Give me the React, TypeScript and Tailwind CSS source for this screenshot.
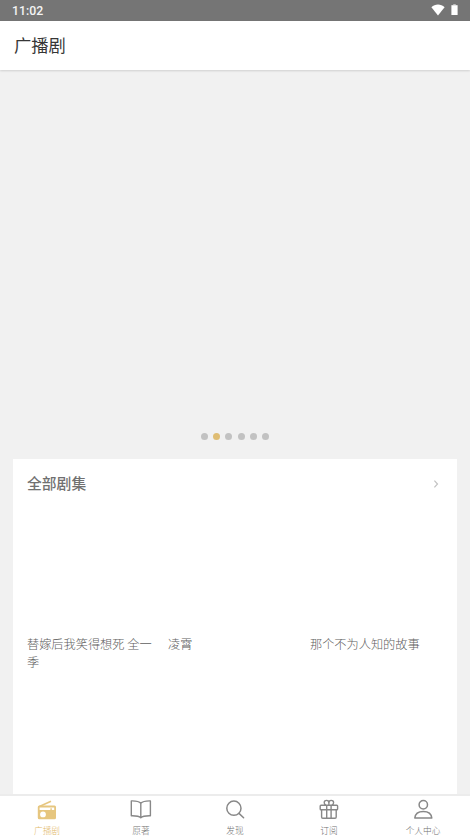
const dots = [0, 1, 2, 3, 4, 5];

const dramas = ["替嫁后我笑得想死 全一季", "凌霄", "那个不为人知的故事"];

function RadioIcon() {
  return (
    <svg width="22" height="22" viewBox="0 0 22 22">
      <path d="M3.4 7.4 15 2.2" stroke="#e6c67f" strokeWidth="1.6" fill="none" />
      <path
        fill="#e6c67f"
        fillRule="evenodd"
        d="M3.3 6.6h15.2a1.5 1.5 0 0 1 1.5 1.5v10.6a1.5 1.5 0 0 1-1.5 1.5H3.3a1.5 1.5 0 0 1-1.5-1.5V8.1a1.5 1.5 0 0 1 1.5-1.5zM3.6 8.4v2.5h10.8V9.2h1.4v1.7h2.4V8.4zM7 12.5a2.9 2.9 0 1 0 0 5.8a2.9 2.9 0 1 0 0-5.8z"
      />
    </svg>
  );
}

function BookIcon() {
  return (
    <svg width="22" height="22" viewBox="0 0 22 22" fill="none" stroke="#888" strokeWidth="1.4" strokeLinejoin="round">
      <path d="M10.8 4.2C9.5 2.7 6 1.8 1.3 1.9V16.8C6 16.7 9.3 17.2 10.8 18.8C12.4 17.2 15.7 16.7 20.4 16.8V1.9C15.7 1.8 12.2 2.7 10.8 4.2zV18.6" />
    </svg>
  );
}

function SearchIcon() {
  return (
    <svg width="22" height="22" viewBox="0 0 22 22" fill="none" stroke="#888" strokeWidth="1.5" strokeLinecap="round">
      <circle cx="9.9" cy="9.2" r="7.1" />
      <path d="m15 14.4 4.6 4.3" />
    </svg>
  );
}

function GiftIcon() {
  return (
    <svg width="22" height="22" viewBox="0 0 22 22" fill="none" stroke="#888" strokeWidth="1.4" strokeLinejoin="round">
      <rect x="2.2" y="6.2" width="17.4" height="4.6" rx="0.8" />
      <path d="M3.6 10.8v7.2a1.2 1.2 0 0 0 1.2 1.2h12.2a1.2 1.2 0 0 0 1.2-1.2v-7.2M8.7 6.2v13M13.1 6.2v13" />
      <path d="M10.9 6V3.9C10.9 .5 6.2 .6 6.2 3.6C6.2 5.2 6.9 5.9 8 6.2M10.9 3.9C10.9 .5 15.6 .6 15.6 3.6C15.6 5.2 14.9 5.9 13.8 6.2" />
    </svg>
  );
}

function UserIcon() {
  return (
    <svg width="22" height="22" viewBox="0 0 22 22" fill="none" stroke="#888" strokeWidth="1.5" strokeLinejoin="round">
      <circle cx="11.3" cy="5.7" r="4.2" />
      <path d="M2.8 19C3.2 14.9 6.5 12.4 11.3 12.4C16.1 12.4 19.4 14.9 19.8 19z" />
    </svg>
  );
}

const tabs = [
  { label: "广播剧", icon: <RadioIcon />, active: true },
  { label: "原著", icon: <BookIcon />, active: false },
  { label: "发现", icon: <SearchIcon />, active: false },
  { label: "订阅", icon: <GiftIcon />, active: false },
  { label: "个人中心", icon: <UserIcon />, active: false },
];

function StatusBar() {
  return (
    <div className="flex h-[21px] shrink-0 items-start justify-between bg-[#757575] pr-[12px] pl-[12px] text-white">
      <span className="font-['Roboto',sans-serif] text-[12.3px] font-medium leading-[22px] text-[#f4f4f4]">11:02</span>
      <div className="flex items-center gap-[6px] pt-[4px]">
        <svg width="14" height="12" viewBox="0 0 14 12" fill="#fff">
          <path d="M7 11.4.4 3.3C4-.3 10-.3 13.6 3.3z" />
        </svg>
        <svg width="7" height="12" viewBox="0 0 7 12">
          <path d="M2.2 0h2.6v1.2H2.2z" fill="#bbb" />
          <path d="M.4 1.2h6.2V11H.4z" fill="#fff" />
        </svg>
      </div>
    </div>
  );
}

export default function App() {
  return (
    <div className="flex h-[837px] w-[470px] flex-col overflow-hidden bg-[#f1f1f1] font-['Noto_Sans_CJK_SC',sans-serif]">
      <StatusBar />
      <header className="flex h-[49px] shrink-0 items-center bg-white pb-[2px] pl-[14px] shadow-[0_1px_2px_rgba(0,0,0,0.14)]">
        <h1 className="text-[17.3px] font-normal leading-[24px] text-[#363636]">广播剧</h1>
      </header>

      <div className="flex h-[389px] shrink-0 items-end justify-center gap-[5.2px] pb-[19px]">
        {dots.map((dot) => (
          <span key={dot} className={`h-[7px] w-[7px] rounded-full ${dot === 1 ? "bg-[#dfbd73]" : "bg-[#c2c2c2]"}`} />
        ))}
      </div>

      <section className="mx-[13px] min-h-0 flex-1 bg-white">
        <div className="flex h-[49px] items-center justify-between pr-[18px] pl-[14px]">
          <h2 className="pb-[2px] text-[14.8px] font-medium leading-[22px] text-[#707070]">全部剧集</h2>
          <svg width="6" height="8" viewBox="0 0 6 8" fill="none" stroke="#c2c2c2" strokeWidth="1.2">
            <path d="m1.4 .7 3.1 3.3-3.1 3.3" />
          </svg>
        </div>
        <div className="mt-[127px] grid grid-cols-[141px_142px_141px] pl-[14px] text-[12.2px] font-light leading-[18px] text-[#606060]">
          {dramas.map((title) => (
            <p key={title} className="pr-[12px]">{title}</p>
          ))}
        </div>
      </section>

      <nav className="grid h-[43px] shrink-0 grid-cols-5 border-t-2 border-[#ececec] bg-white">
        {tabs.map((tab) => (
          <div key={tab.label} className={`flex flex-col items-center pt-[3px] ${tab.active ? "text-[#dfb968]" : "text-[#707070]"}`}>
            {tab.icon}
            <span className="mt-[4px] text-[8.7px] font-light leading-[12px]">{tab.label}</span>
          </div>
        ))}
      </nav>
    </div>
  );
}
